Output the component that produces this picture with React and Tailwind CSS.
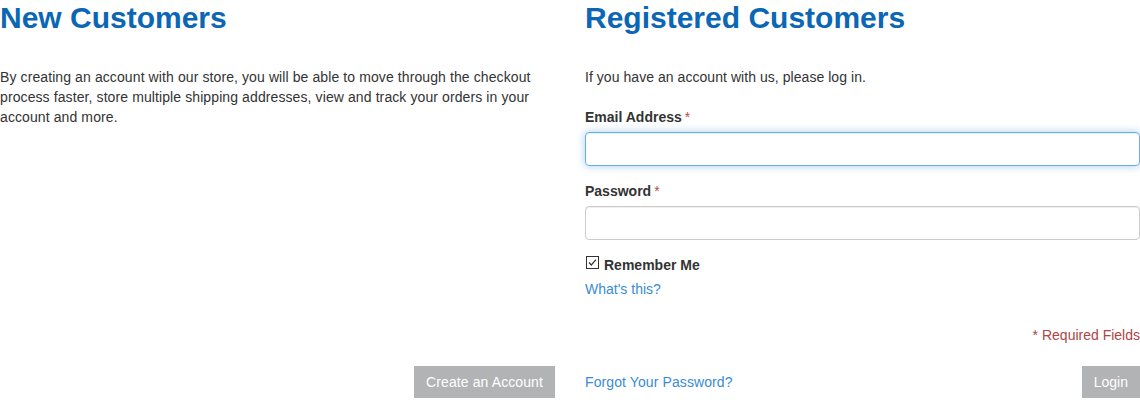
export default function App() {
  return (
    <div className="w-[1140px] bg-white text-[14px] leading-5 text-[#333] font-['Liberation_Sans',Arial,sans-serif]">
      <div className="grid grid-cols-[555px_555px] gap-x-[30px]">
        <div>
          <h2 className="text-[30px] leading-[36px] font-bold text-[#0b67b5]">New Customers</h2>
          <p className="mt-[31px] tracking-[0.1px]">
            By creating an account with our store, you will be able to move through the checkout process faster, store multiple shipping addresses, view and track your orders in your account and more.
          </p>
        </div>

        <div>
          <h2 className="text-[30px] leading-[36px] font-bold text-[#0b67b5]">Registered Customers</h2>
          <p className="mt-[31px] tracking-[0.05px]">If you have an account with us, please log in.</p>

          <FieldLabel text="Email Address" className="mt-5" />
          <input
            type="email"
            className="mt-[5px] block h-[34px] w-full rounded-[4px] border border-[#66afe9] px-3 outline-none shadow-[inset_0_1px_1px_rgba(0,0,0,0.075),0_0_8px_rgba(102,175,233,0.6)]"
          />

          <FieldLabel text="Password" className="mt-[15px]" />
          <input
            type="password"
            className="mt-[5px] block h-[34px] w-full rounded-[4px] border border-[#ccc] px-3 outline-none shadow-[inset_0_1px_1px_rgba(0,0,0,0.075)]"
          />

          <div className="mt-[15px] flex h-5 items-start">
            <svg width="13" height="13" viewBox="0 0 13 13" className="ml-px mt-px">
              <rect x="0.5" y="0.5" width="12" height="12" fill="#fff" stroke="#333" />
              <path d="M3 6.5 L5.3 9 L10 3.6" fill="none" stroke="#333" strokeWidth="1.2" />
            </svg>
            <span className="ml-[5px] font-bold">Remember Me</span>
          </div>
          <a href="#" className="mt-[4px] block w-fit text-[#3a8bd6]">What's this?</a>

          <p className="mt-[26px] text-right text-[#b04444]">* Required Fields</p>
        </div>

        <div className="mt-[21px] flex justify-end">
          <button className="h-8 bg-[#b2b3b5] px-[12px] text-white tracking-[0.1px]">Create an Account</button>
        </div>
        <div className="mt-[21px] flex h-8 items-center justify-between">
          <a href="#" className="text-[#3a8bd6] tracking-[0.1px]">Forgot Your Password?</a>
          <button className="h-8 bg-[#b2b3b5] px-[12px] text-white">Login</button>
        </div>
      </div>
    </div>
  );
}

function FieldLabel({ text, className }) {
  return (
    <label className={`block font-bold ${className}`}>
      {text}
      <span className="ml-[3px] font-normal text-[#b94a48]">*</span>
    </label>
  );
}
